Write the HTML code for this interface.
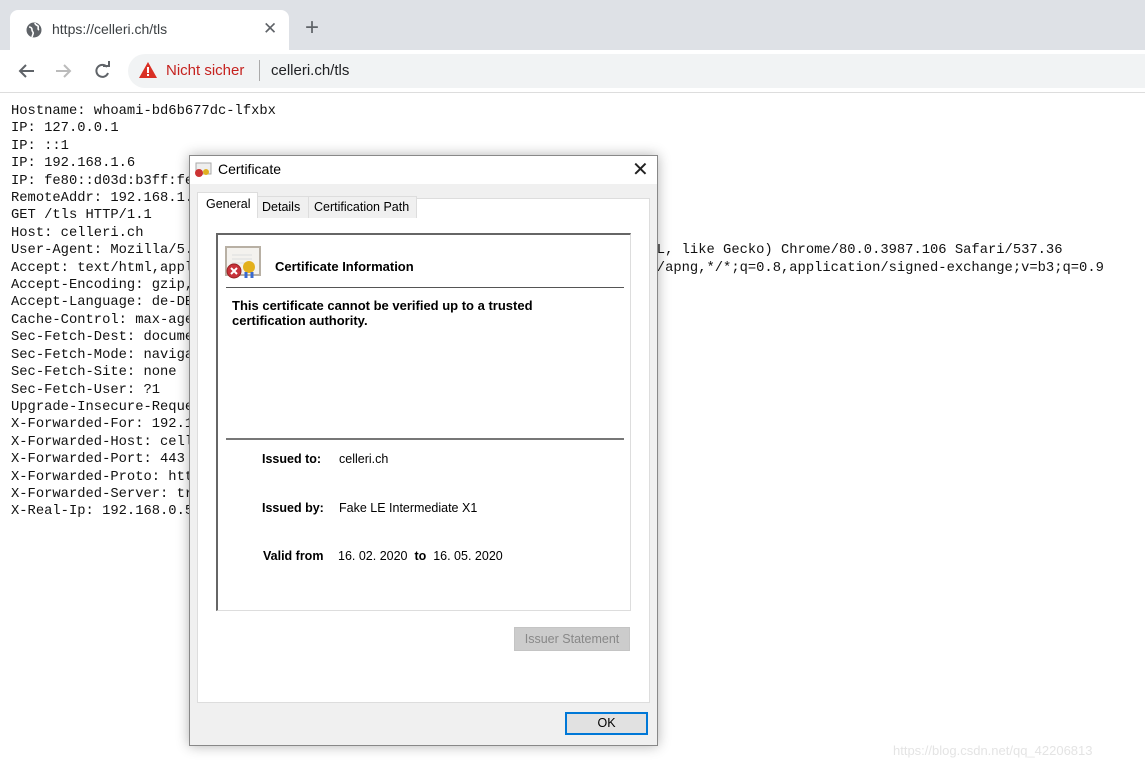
<!DOCTYPE html>
<html><head><style>
body{margin:0;width:1145px;height:769px;background:#fff;position:relative;overflow:hidden;font-family:"Liberation Sans",sans-serif}
.a{position:absolute}
pre{position:absolute;left:11px;top:103px;margin:0;font-family:"Liberation Mono",monospace;font-size:13.8px;line-height:17.4px;color:#111}
.dlg{font-family:"Liberation Sans",sans-serif;font-size:12px;color:#000}
b{font-weight:bold}
</style></head><body>
<div class="a" style="left:0;top:0;width:1145px;height:50px;background:#dee1e6"></div>
<div class="a" style="left:10px;top:10px;width:279px;height:42px;background:#fff;border-radius:8px 8px 0 0"></div>
<div class="a" style="left:0;top:50px;width:1145px;height:42px;background:#fff;border-bottom:1px solid #ddd"></div>
<svg class="a" style="left:26px;top:22px" width="16" height="16" viewBox="0 0 16 16"><circle cx="8" cy="8" r="7.5" fill="#5f6368"/><path d="M3 5c2 0 3 1 3 3s2 2 1 4l-1 3M9 1c0 2 2 2 3 3s-1 3 1 4" stroke="#fff" stroke-width="1.6" fill="none"/></svg>
<div class="a" style="left:52px;top:21px;font-size:14px;color:#3c4043">https://celleri.ch/tls</div>
<div class="a" style="left:263px;top:19px;font-size:17px;color:#5f6368">✕</div>
<div class="a" style="left:305px;top:14px;font-size:24px;color:#5f6368">+</div>
<svg class="a" style="left:17px;top:61px" width="100" height="20" viewBox="0 0 100 20"><path d="M17 10H3M9 4L3 10l6 6" stroke="#5f6368" stroke-width="2" fill="none"/><path d="M39 10h14M47 4l6 6-6 6" stroke="#bbb" stroke-width="2" fill="none"/><path d="M90 6a6 6 0 1 0 1 6" stroke="#5f6368" stroke-width="2" fill="none"/><path d="M86 5h6V0" stroke="#5f6368" stroke-width="2" fill="none"/></svg>
<div class="a" style="left:128px;top:54px;width:1017px;height:34px;background:#f1f3f4;border-radius:17px 0 0 17px"></div>
<svg class="a" style="left:139px;top:62px" width="18" height="16" viewBox="0 0 18 16"><path d="M9 0L18 16H0z" fill="#d93025"/><rect x="8" y="5" width="2" height="6" fill="#fff"/><rect x="8" y="12" width="2" height="2" fill="#fff"/></svg>
<div class="a" style="left:166px;top:62px;font-size:15px;color:#c5221f">Nicht sicher</div>
<div class="a" style="left:259px;top:60px;width:1px;height:21px;background:#aaa"></div>
<div class="a" style="left:271px;top:62px;font-size:15px;color:#202124">celleri.ch/tls</div>
<pre>Hostname: whoami-bd6b677dc-lfxbx
IP: 127.0.0.1
IP: ::1
IP: 192.168.1.6
IP: fe80::d03d:b3ff:fe
RemoteAddr: 192.168.1.
GET /tls HTTP/1.1
Host: celleri.ch
User-Agent: Mozilla/5.0 (Windows NT 10.0; Win64; x64) AppleWebKit/537.36 (KHTML, like Gecko) Chrome/80.0.3987.106 Safari/537.36
Accept: text/html,application/xhtml+xml,application/xml;q=0.9,image/webp,image/apng,*/*;q=0.8,application/signed-exchange;v=b3;q=0.9
Accept-Encoding: gzip,
Accept-Language: de-DE
Cache-Control: max-age
Sec-Fetch-Dest: docume
Sec-Fetch-Mode: naviga
Sec-Fetch-Site: none
Sec-Fetch-User: ?1
Upgrade-Insecure-Reque
X-Forwarded-For: 192.1
X-Forwarded-Host: cell
X-Forwarded-Port: 443
X-Forwarded-Proto: htt
X-Forwarded-Server: tr
X-Real-Ip: 192.168.0.5</pre>
<div class="a dlg" style="left:189px;top:155px;width:467px;height:589px;background:#f0f0f0;border:1px solid #888;box-shadow:0 0 12px rgba(0,0,0,.3)">
 <div class="a" style="left:0;top:0;width:467px;height:28px;background:#fff"></div>
 <svg class="a" style="left:4px;top:6px" width="18" height="16" viewBox="0 0 18 16"><rect x="2" y="1" width="15" height="11" fill="#eee" stroke="#aaa"/><circle cx="5" cy="11" r="4" fill="#c33"/><circle cx="12" cy="10" r="3" fill="#e0b020"/></svg>
 <div class="a" style="left:28px;top:5px;font-size:14px">Certificate</div>
 <div class="a" style="left:442px;top:1px;font-size:20px;color:#222">✕</div>
 <div class="a" style="left:7px;top:42px;width:451px;height:503px;background:#fff;border:1px solid #ddd"></div>
 <div class="a" style="left:7px;top:36px;width:59px;height:24px;background:#fff;border:1px solid #ddd;border-bottom:none"></div>
 <div class="a" style="left:16px;top:41px;font-size:12.5px">General</div>
 <div class="a" style="left:67px;top:40px;width:50px;height:21px;background:#f0f0f0;border:1px solid #ddd;border-bottom:none"></div>
 <div class="a" style="left:72px;top:44px;font-size:12.5px">Details</div>
 <div class="a" style="left:118px;top:40px;width:107px;height:21px;background:#f0f0f0;border:1px solid #ddd;border-bottom:none"></div>
 <div class="a" style="left:124px;top:44px;font-size:12.5px">Certification Path</div>
 <div class="a" style="left:26px;top:77px;width:412px;height:375px;background:#fff;border-top:2px solid #666;border-left:2px solid #666;border-right:1px solid #ddd;border-bottom:1px solid #ddd"></div>
 <svg class="a" style="left:34px;top:89px" width="40" height="36" viewBox="0 0 40 36"><rect x="2" y="2" width="34" height="28" fill="#f4f2ee" stroke="#b8b0a4" stroke-width="2"/><path d="M8 10h20M8 14h20M8 18h14" stroke="#ddd"/><circle cx="10" cy="26" r="7" fill="#c8323a" stroke="#922"/><path d="M7 23l6 6M13 23l-6 6" stroke="#fff" stroke-width="2"/><circle cx="25" cy="22" r="6" fill="#e3b01c"/><path d="M22 27v6M28 27v6" stroke="#3a6ad0" stroke-width="3"/></svg>
 <div class="a" style="left:85px;top:103px;font-size:13px;font-weight:bold">Certificate Information</div>
 <div class="a" style="left:36px;top:131px;width:398px;height:1px;background:#555"></div>
 <div class="a" style="left:42px;top:142px;font-size:13px;font-weight:bold;line-height:15px">This certificate cannot be verified up to a trusted<br>certification authority.</div>
 <div class="a" style="left:36px;top:282px;width:398px;height:2px;background:#777"></div>
 <div class="a" style="left:72px;top:296px;font-size:12.5px"><b>Issued to:</b></div><div class="a" style="left:149px;top:296px;font-size:12.5px">celleri.ch</div>
 <div class="a" style="left:72px;top:345px;font-size:12.5px"><b>Issued by:</b></div><div class="a" style="left:149px;top:345px;font-size:12.5px">Fake LE Intermediate X1</div>
 <div class="a" style="left:73px;top:393px;font-size:12.5px"><b>Valid from</b></div><div class="a" style="left:148px;top:393px;font-size:12.5px">16. 02. 2020 &nbsp;<b>to</b>&nbsp; 16. 05. 2020</div>
 <div class="a" style="left:324px;top:471px;width:114px;height:22px;background:#ccc;border:1px solid #c4c4c4;color:#888;font-size:12.5px;text-align:center;line-height:22px">Issuer Statement</div>
 <div class="a" style="left:375px;top:556px;width:79px;height:19px;background:#e1e1e1;border:2px solid #0078d7;font-size:12.5px;text-align:center;line-height:19px">OK</div>
</div>
<div class="a" style="left:893px;top:743px;font-size:13px;color:#e4e4e4">https://blog.csdn.net/qq_42206813</div>
</body></html>
